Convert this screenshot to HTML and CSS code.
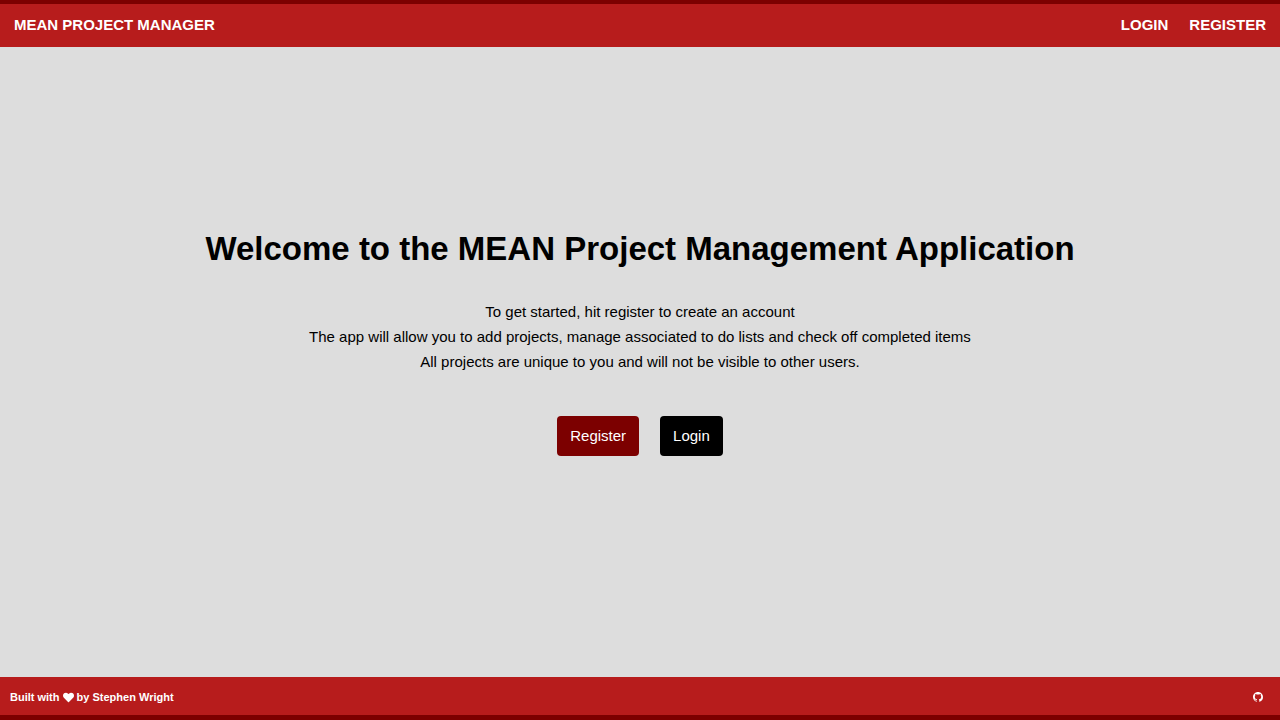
FILE: index.html
```html
<!DOCTYPE html>
<html lang="en">
<head>
<meta charset="utf-8">
<title>MEAN Project Manager</title>
<link rel="stylesheet" href="styles.css">
</head>
<body>
<header class="navbar">
  <a class="brand" href="#">MEAN PROJECT MANAGER</a>
  <nav class="nav-links">
    <a href="#login">LOGIN</a>
    <a href="#register">REGISTER</a>
  </nav>
</header>
<main class="hero">
  <h1 class="hero-title">Welcome to the MEAN Project Management Application</h1>
  <div class="hero-text">
    <p>To get started, hit register to create an account</p>
    <p>The app will allow you to add projects, manage associated to do lists and check off completed items</p>
    <p>All projects are unique to you and will not be visible to other users.</p>
  </div>
  <div class="actions">
    <a class="btn btn-register" href="#register">Register</a>
    <a class="btn btn-login" href="#login">Login</a>
  </div>
</main>
<footer class="footer">
  <p class="credit">Built with <svg class="heart" viewBox="0 0 512 512" role="img" aria-label="love"><path d="M462.3 62.6C407.500 15.900 326 24.300 275.700 76.200L256 96.500l-19.700-20.300C186.100 24.300 104.500 15.900 49.700 62.600c-62.800 53.600-66.100 149.800-9.900 207.900l193.500 199.800c12.500 12.900 32.800 12.900 45.300 0l193.500-199.800c56.300-58.100 53-154.300-9.800-207.900z"/></svg> by Stephen Wright</p>
  <a class="github" href="#github" aria-label="GitHub"><svg viewBox="0 0 16 16" aria-hidden="true"><path d="M8 0C3.580 0 0 3.580 0 8c0 3.540 2.290 6.530 5.470 7.590.4.070.55-.17.55-.38 0-.19-.01-.82-.01-1.490-2.010.37-2.530-.49-2.690-.94-.09-.23-.48-.94-.82-1.130-.28-.15-.68-.52-.01-.53.63-.01 1.080.58 1.230.82.72 1.210 1.870.87 2.330.66.07-.52.28-.87.51-1.070-1.780-.2-3.640-.89-3.640-3.950 0-.87.31-1.590.82-2.150-.08-.2-.36-1.020.08-2.120 0 0 .67-.21 2.200.82.64-.18 1.320-.27 2-.27s1.360.09 2 .27c1.530-1.040 2.200-.82 2.200-.82.44 1.100.16 1.920.08 2.120.51.56.82 1.270.82 2.150 0 3.070-1.870 3.750-3.650 3.950.29.25.54.73.54 1.480 0 1.070-.01 1.930-.01 2.200 0 .21.15.46.55.38A8.010 8.010 0 0 0 16 8c0-4.420-3.580-8-8-8z"/></svg></a>
</footer>
</body>
</html>
```
FILE: styles.css
```css
* { box-sizing: border-box; margin: 0; padding: 0; }
body {
  min-height: 100vh;
  display: flex;
  flex-direction: column;
  background: #ddd;
  color: #000;
  font-family: "Liberation Sans", Arial, sans-serif;
  font-size: 15px;
}
a { color: inherit; text-decoration: none; }
.navbar {
  display: flex;
  align-items: center;
  justify-content: space-between;
  padding: 11px 14px 12px;
  border-top: 4px solid #7c0000;
  background: #b71c1c;
  color: #fff;
  font-weight: bold;
  line-height: 20px;
}
.nav-links { display: flex; gap: 21px; }
.hero {
  flex: 1;
  display: flex;
  flex-direction: column;
  align-items: center;
  justify-content: center;
  text-align: center;
  padding: 0 16px 39px;
}
.hero-title { font-size: 33px; line-height: 40px; }
.hero-text { margin: 30px 0 42px; line-height: 25px; }
.actions { display: flex; gap: 21px; }
.btn {
  padding: 10px 13px;
  border-radius: 4px;
  line-height: 20px;
  color: #fff;
}
.btn-register { background: #7c0000; }
.btn-login { background: #000; }
.footer {
  display: flex;
  align-items: center;
  justify-content: space-between;
  padding: 10px 17px 8px 10px;
  border-bottom: 5px solid #7c0000;
  background: #b71c1c;
  color: #fff;
  font-size: 11px;
  font-weight: bold;
  line-height: 20px;
}
.heart { width: 11px; height: 11px; fill: #fff; vertical-align: -2px; }
.github { display: flex; }
.github svg { width: 10px; height: 10px; fill: #fff; }
```
